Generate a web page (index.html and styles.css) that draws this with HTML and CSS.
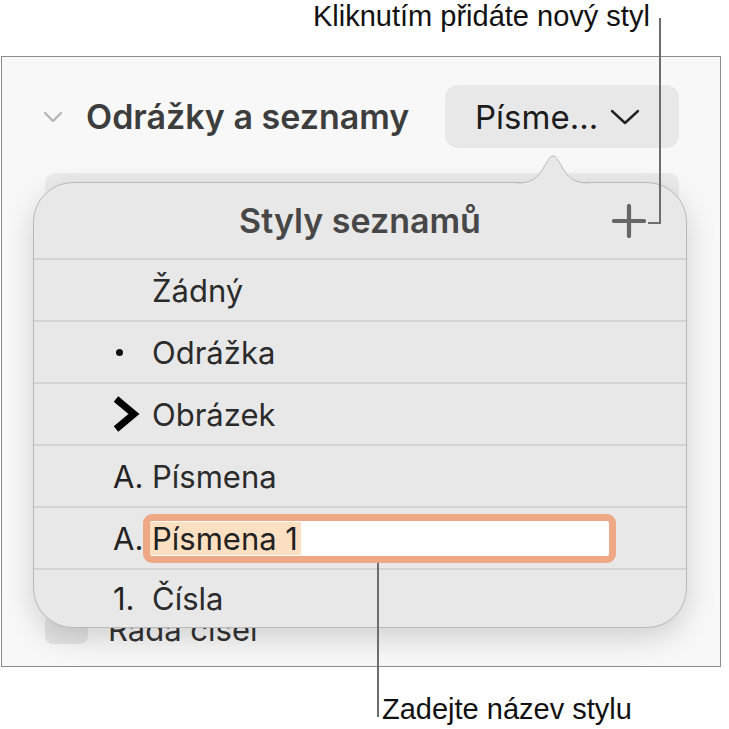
FILE: index.html
```html
<!DOCTYPE html>
<html lang="cs">
<head>
    <meta charset="UTF-8">
    <title>Styly seznamů</title>
    <link rel="stylesheet" href="styles.css">
</head>
<body>
    <div class="figure">
        <!-- Top callout -->
        <p class="callout callout-top">Kliknutím přidáte nový styl</p>

        <div class="panel">
            <div class="panel-head">
                <svg class="disclosure" width="20" height="12" viewBox="0 0 20 12">
                    <polyline points="2,2 10,10 18,2" fill="none" stroke="#b6b6b6" stroke-width="2.4" stroke-linecap="round" stroke-linejoin="round"/>
                </svg>
                <h2 class="panel-title">Odrážky a seznamy</h2>
                <div class="select">
                    <span>Písme…</span>
                    <svg width="30" height="18" viewBox="0 0 30 18">
                        <polyline points="2,3 15,15 28,3" fill="none" stroke="#222" stroke-width="2.4" stroke-linecap="round" stroke-linejoin="round"/>
                    </svg>
                </div>
            </div>

            <div class="style-select"></div>

            <div class="numbering-row">
                <span class="checkbox"></span>
                <span class="numbering-label">Řada čísel</span>
            </div>

            <!-- Popover with list styles -->
            <div class="popover">
                <svg class="popover-arrow" width="72" height="29" viewBox="0 0 72 29">
                    <path d="M0 29 L0 28 C14 28 20 24 27 12 C31 5 33 1 36 1 C39 1 41 5 45 12 C52 24 58 28 72 28 L72 29 Z" fill="#e8e8e8"/>
                    <path d="M0 28 C14 28 20 24 27 12 C31 5 33 1 36 1 C39 1 41 5 45 12 C52 24 58 28 72 28" fill="none" stroke="#b9b9b9" stroke-width="1"/>
                </svg>
                <div class="popover-head">
                    <span></span>
                    <h3 class="popover-title">Styly seznamů</h3>
                    <svg class="plus" width="34" height="34" viewBox="0 0 34 34">
                        <path d="M17 2 V32 M2 17 H32" stroke="#666" stroke-width="4.2" stroke-linecap="round"/>
                    </svg>
                </div>
                <div class="list-row">
                    <span class="marker"></span>
                    <span class="label">Žádný</span>
                </div>
                <div class="list-row">
                    <span class="marker"><span class="dot"></span></span>
                    <span class="label">Odrážka</span>
                </div>
                <div class="list-row">
                    <span class="marker">
                        <svg width="27" height="36" viewBox="0 0 27 36">
                            <polyline points="3,3 21,18 3,33" fill="none" stroke="#000" stroke-width="7"/>
                        </svg>
                    </span>
                    <span class="label">Obrázek</span>
                </div>
                <div class="list-row">
                    <span class="marker">A.</span>
                    <span class="label">Písmena</span>
                </div>
                <div class="list-row">
                    <span class="marker marker-short">A.</span>
                    <div class="name-field"><span class="selected">Písmena 1</span></div>
                </div>
                <div class="list-row">
                    <span class="marker">1.</span>
                    <span class="label">Čísla</span>
                </div>
            </div>
        </div>

        <!-- Bottom callout -->
        <p class="callout callout-bottom">Zadejte název stylu</p>

        <span class="leader leader-top-v"></span>
        <span class="leader leader-top-h"></span>
        <span class="leader leader-bottom"></span>
    </div>
</body>
</html>
```

FILE: styles.css
```css
/* Page */
body {
    margin: 0;
    background-color: #fff;
    font-family: Inter, "Noto Sans", sans-serif;
}

.figure {
    position: relative;
    width: 729px;
    height: 729px;
}

/* Callout texts */
.callout {
    margin: 0;
    font-family: "Liberation Sans", Arial, sans-serif;
    font-size: 29px;
    line-height: 32px;
    color: #111;
}

.callout-top {
    height: 56px;
    padding-left: 313px;
    box-sizing: border-box;
    padding-top: 0;
}

.callout-bottom {
    padding-left: 382px;
    margin-top: 26px;
}

/* Leader lines */
.leader {
    position: absolute;
    background-color: #6d6d6d;
}

.leader-top-v {
    left: 659px;
    top: 18px;
    width: 2px;
    height: 206px;
}

.leader-top-h {
    left: 648px;
    top: 222px;
    width: 12px;
    height: 2px;
}

.leader-bottom {
    left: 377px;
    top: 563px;
    width: 2px;
    height: 154px;
}

/* Inspector panel */
.panel {
    position: relative;
    margin-left: 1px;
    width: 720px;
    height: 611px;
    box-sizing: border-box;
    border: 1px solid #8c8c8c;
    background-color: #f8f8f8;
}

.panel-head {
    display: flex;
    align-items: center;
    padding: 28px 41px 0 41px;
}

.disclosure {
    margin-right: 23px;
}

.panel-title {
    flex: 1;
    margin: 0;
    font-size: 34px;
    font-weight: 600;
    color: #3d3d3d;
    white-space: nowrap;
}

.select {
    display: flex;
    align-items: center;
    gap: 12px;
    width: 234px;
    height: 63px;
    padding-left: 30px;
    box-sizing: border-box;
    border-radius: 13px;
    background-color: #e8e8e8;
    font-size: 33px;
    color: #1c1c1c;
}

.style-select {
    margin: 25px 41px 0 43px;
    height: 60px;
    border-radius: 10px;
    background-color: #ebebeb;
}

.numbering-row {
    display: flex;
    align-items: center;
    gap: 20px;
    margin: 378px 0 0 43px;
}

.checkbox {
    width: 43px;
    height: 29px;
    border-radius: 8px;
    background-color: #e4e4e4;
}

.numbering-label {
    font-size: 31px;
    color: #333;
}

/* Popover */
.popover {
    position: absolute;
    left: 31px;
    top: 125px;
    width: 654px;
    height: 446px;
    box-sizing: border-box;
    border: 1px solid #b9b9b9;
    border-radius: 40px;
    background-color: #e8e8e8;
    box-shadow: 0 10px 30px rgba(0, 0, 0, 0.16);
}

.popover-arrow {
    position: absolute;
    left: 483px;
    top: -28px;
}

.popover-head {
    display: grid;
    grid-template-columns: 1fr auto 1fr;
    align-items: center;
    height: 75px;
    padding-right: 40px;
    padding-left: 40px;
}

.popover-title {
    margin: 0;
    font-size: 34px;
    font-weight: 600;
    color: #474747;
}

.plus {
    justify-self: end;
}

.list-row {
    display: flex;
    align-items: center;
    height: 60px;
    padding-left: 79px;
    border-top: 2px solid #d4d4d4;
    font-size: 31px;
    color: #2b2b2b;
}

.list-row:last-child {
    height: 57px;
}

.marker {
    display: flex;
    align-items: center;
    width: 39px;
    color: #222;
}

.marker-short {
    width: 30px;
}

.dot {
    width: 7px;
    height: 7px;
    margin-left: 3px;
    border-radius: 50%;
    background-color: #111;
}

.name-field {
    display: flex;
    align-items: center;
    width: 473px;
    height: 49px;
    box-sizing: border-box;
    border: 7px solid #efa885;
    border-radius: 9px;
    background-color: #fff;
}

.selected {
    padding: 0 3px 0 2px;
    background-color: #fde0c2;
    line-height: 33px;
    color: #222;
}
```
